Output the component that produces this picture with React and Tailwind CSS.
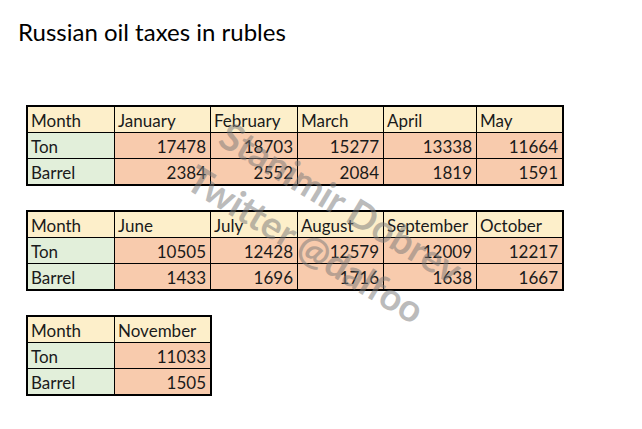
import React from "react";

const font = { fontFamily: "Lato, 'Open Sans', sans-serif" };

function DataTable({ months, ton, barrel, cols }) {
  const head = "bg-[#fdefca] pl-[3px] pt-[5px] h-[25px]";
  const label = "bg-[#e2efda] pl-[3px] pt-[5px] h-[25px]";
  const num = "bg-[#f8cbad] pr-[4px] pt-[5px] h-[25px] text-right";
  return (
    <div
      className={`grid ${cols} gap-px bg-black border-2 border-black text-[17px] leading-none text-[#1a1a1a]`}
      style={font}
    >
      <div className={head}>Month</div>
      {months.map((m) => (
        <div key={m} className={head}>{m}</div>
      ))}
      <div className={label}>Ton</div>
      {ton.map((v, i) => (
        <div key={i} className={num}>{v}</div>
      ))}
      <div className={label}>Barrel</div>
      {barrel.map((v, i) => (
        <div key={i} className={num}>{v}</div>
      ))}
    </div>
  );
}

export default function App() {
  return (
    <div className="relative w-[642px] h-[429px] bg-white overflow-hidden">
      <div className="pl-[18px] pt-[20px] text-[24px] leading-none text-black" style={font}>
        Russian oil taxes in rubles
      </div>
      <div className="flex flex-col items-start gap-[24px] pl-[26px] pt-[61px]">
        <DataTable
          cols="grid-cols-[86px_95px_86px_85px_92px_85px]"
          months={["January", "February", "March", "April", "May"]}
          ton={[17478, 18703, 15277, 13338, 11664]}
          barrel={[2384, 2552, 2084, 1819, 1591]}
        />
        <DataTable
          cols="grid-cols-[86px_95px_86px_85px_92px_85px]"
          months={["June", "July", "August", "September", "October"]}
          ton={[10505, 12428, 12579, 12009, 12217]}
          barrel={[1433, 1696, 1716, 1638, 1667]}
        />
        <DataTable
          cols="grid-cols-[86px_95px]"
          months={["November"]}
          ton={[11033]}
          barrel={[1505]}
        />
      </div>
      <div
        className="absolute left-[238px] top-[108px] origin-top-left rotate-[31deg] text-[38px] font-bold leading-[54px] text-[rgba(120,120,120,0.5)] whitespace-nowrap pointer-events-none"
        style={font}
      >
        <div>Stanimir Dobrev</div>
        <div className="-ml-[6px]">Twitter @dalfoo</div>
      </div>
    </div>
  );
}
